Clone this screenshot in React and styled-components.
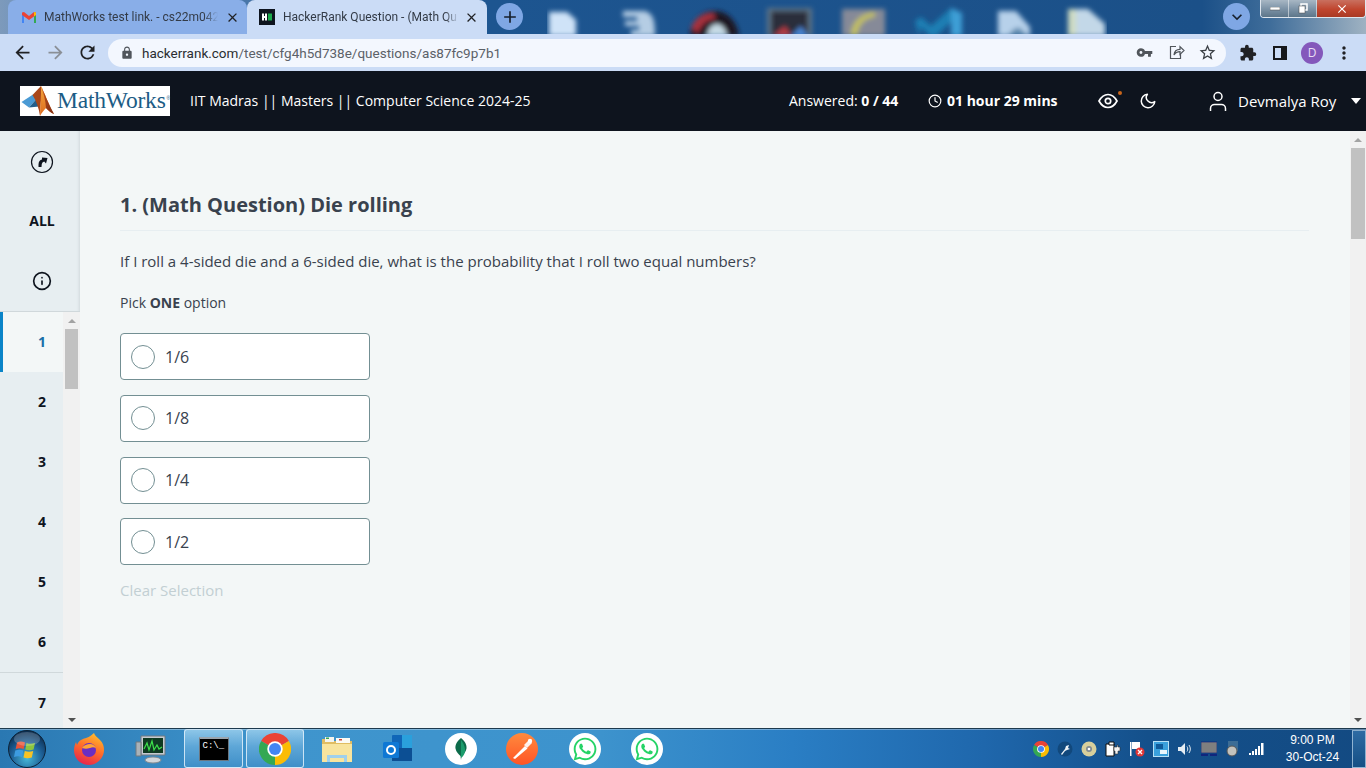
import React from "react";
import styled, { createGlobalStyle } from "styled-components";
import {
  MdArrowBack,
  MdArrowForward,
  MdRefresh,
  MdLock,
  MdVpnKey,
  MdExtension,
  MdMoreVert,
  MdStarBorder,
  MdClose,
  MdAdd,
  MdKeyboardArrowDown,
} from "react-icons/md";
import { FaWhatsapp } from "react-icons/fa";
import { FiClock, FiInfo, FiMoon } from "react-icons/fi";

const GlobalStyle = createGlobalStyle`
  html, body { margin: 0; padding: 0; background: #f3f7f7; }
  * { box-sizing: border-box; }
`;

const Screen = styled.div`
  width: 1366px;
  height: 768px;
  overflow: hidden;
  display: flex;
  flex-direction: column;
  font-family: "Open Sans", "Noto Sans", sans-serif;
`;

/* browser chrome */
const TabStrip = styled.div`
  height: 34px;
  flex: none;
  display: flex;
  padding-left: 8px;
  background: linear-gradient(90deg, #7d9abb 0, #6f93bd 2%, #1d5590 36%, #1b5088 88%, #3f6d9a 93%, #9fb2c2 100%);
  overflow: hidden;
`;
const Tab = styled.div`
  width: ${(p) => p.$w}px;
  height: 34px;
  flex: none;
  display: flex;
  align-items: center;
  padding-left: ${(p) => p.$pad}px;
  border-radius: 8px 8px 0 0;
  background: ${(p) => (p.$active ? "#cbdcf6" : "#89aee8")};
  color: #333b47;
  font-family: "Roboto", sans-serif;
  font-size: 12px;
`;
const TabTitle = styled.span`
  width: ${(p) => p.$w}px;
  margin-left: ${(p) => p.$gap}px;
  white-space: nowrap;
  -webkit-mask-image: linear-gradient(90deg, #000 92%, transparent);
  mask-image: linear-gradient(90deg, #000 92%, transparent);
`;
const TabClose = styled(MdClose)`
  margin-left: ${(p) => p.$gap}px;
  font-size: 15px;
  color: #202124;
`;
const RoundButton = styled.div`
  width: 27px;
  height: 27px;
  margin: 3px 0 0 ${(p) => p.$left}px;
  flex: none;
  border-radius: 50%;
  background: #7fa7e4;
  color: #17202c;
  font-size: 20px;
  display: flex;
  align-items: center;
  justify-content: center;
`;
const DesktopPeek = styled.svg`
  margin-left: 24px;
  flex: none;
`;
const WindowControls = styled.div`
  width: 106px;
  height: 18px;
  margin-left: 10px;
  flex: none;
  display: flex;
  border: 1px solid #dfe6ee;
  border-top: none;
  border-radius: 0 0 4px 4px;
  overflow: hidden;
`;
const WindowButton = styled.div`
  width: ${(p) => p.$w}px;
  flex: none;
  display: flex;
  align-items: center;
  justify-content: center;
  border-right: 1px solid rgba(255, 255, 255, 0.5);
  background: ${(p) =>
    p.$close
      ? "linear-gradient(#c9705f, #c0452e 55%, #a93a24)"
      : "linear-gradient(#a8b7c4, #7e94a8 50%, #5d7689)"};
  color: #fff;
`;

const Toolbar = styled.div`
  height: 37px;
  flex: none;
  display: flex;
  align-items: center;
  padding-left: 12px;
  background: #cbdcf6;
  color: #2f3338;
`;
const NavIcon = styled.div`
  width: ${(p) => p.$w}px;
  padding-left: ${(p) => p.$pad || 0}px;
  flex: none;
  display: flex;
  align-items: center;
  color: ${(p) => p.$color || "#202124"};
  font-size: ${(p) => p.$size || 21}px;
`;
const Omnibox = styled.div`
  width: 1118px;
  height: 28px;
  margin-left: 8px;
  flex: none;
  display: flex;
  align-items: center;
  padding-left: 12px;
  border-radius: 14px;
  background: #f3f7fe;
`;
const Url = styled.div`
  width: 994px;
  margin-left: 8px;
  flex: none;
  font-family: "Roboto", sans-serif;
  font-size: 13.5px;
  color: #5b6168;
  span { color: #2a2d31; }
`;
const Avatar = styled.div`
  width: 22px;
  height: 22px;
  margin-left: 11px;
  flex: none;
  border-radius: 50%;
  background: #8458bb;
  color: #e9def5;
  font-size: 12px;
  display: flex;
  align-items: center;
  justify-content: center;
`;

/* app header */
const AppHeader = styled.header`
  height: 60px;
  flex: none;
  display: flex;
  align-items: center;
  padding: 0 0 1px 20px;
  background: #0e141e;
  color: #fff;
  font-size: 14px;
`;
const Logo = styled.div`
  width: 150px;
  height: 30px;
  flex: none;
  display: flex;
  align-items: center;
  background: #fff;
  svg { flex: none; }
`;
const LogoText = styled.span`
  margin-left: 2px;
  font-family: "Liberation Serif", serif;
  font-size: 23.5px;
  letter-spacing: -0.2px;
  color: #1c5c85;
`;
const LogoMark = styled.span`
  margin: -5px 0 0 1px;
  font-family: "Liberation Sans", sans-serif;
  font-size: 5px;
  color: #1c5c85;
`;
const TestName = styled.div`
  width: 599px;
  margin-left: 20px;
  flex: none;
  white-space: nowrap;
`;
const Answered = styled.div`
  width: 139px;
  flex: none;
  white-space: nowrap;
  b { font-weight: 700; }
`;
const Timer = styled.div`
  width: 170px;
  flex: none;
  display: flex;
  align-items: center;
  gap: 5px;
  font-weight: 700;
  white-space: nowrap;
  svg { font-size: 14px; }
`;
const EyeWrap = styled.div`
  position: relative;
  width: 41px;
  flex: none;
  display: flex;
`;
const EyeDot = styled.span`
  position: absolute;
  left: 20px;
  top: -2px;
  width: 4px;
  height: 4px;
  border-radius: 50%;
  background: #c8651b;
`;
const Moon = styled.div`
  width: 70px;
  flex: none;
  display: flex;
  font-size: 18px;
`;
const UserName = styled.div`
  width: 113px;
  margin-left: 11px;
  flex: none;
  font-size: 15px;
  white-space: nowrap;
`;
const Caret = styled.div`
  width: 0;
  height: 0;
  border-left: 5px solid transparent;
  border-right: 5px solid transparent;
  border-top: 6px solid #fff;
`;

/* page body */
const Body = styled.div`
  flex: 1;
  min-height: 0;
  display: flex;
  background: #f3f7f7;
`;
const Sidebar = styled.aside`
  width: 80px;
  flex: none;
  display: flex;
  flex-direction: column;
  background: #e7eef1;
`;
const SideTools = styled.div`
  flex: none;
  border-bottom: 1px solid #d0d8db;
  box-shadow: inset -3px 0 3px -2px rgba(57, 66, 78, 0.12);
`;
const SideTool = styled.div`
  height: 60px;
  display: flex;
  align-items: center;
  justify-content: center;
  padding: ${(p) => p.$top || 0}px 0 ${(p) => p.$bottom || 0}px 4px;
  color: #0e141e;
  font-size: 14px;
  font-weight: 700;
`;
const SideList = styled.div`
  flex: 1;
  min-height: 0;
  display: flex;
`;
const Numbers = styled.div`
  width: 63px;
  flex: none;
  overflow: hidden;
`;
const NumberItem = styled.div`
  height: ${(p) => (p.$divided ? 61 : 60)}px;
  display: flex;
  align-items: center;
  justify-content: center;
  padding: 0 0 2px ${(p) => (p.$active ? 18 : 21)}px;
  border-left: ${(p) => (p.$active ? "3px solid #0a84c8" : "none")};
  border-bottom: ${(p) => (p.$divided ? "1px solid #d0d8db" : "none")};
  background: ${(p) => (p.$active ? "#f3f7f7" : "transparent")};
  color: ${(p) => (p.$active ? "#1b6ea8" : "#0e141e")};
  font-size: 14px;
  font-weight: 700;
`;
const Scrollbar = styled.div`
  width: ${(p) => p.$w}px;
  flex: none;
  display: flex;
  flex-direction: column;
  align-items: center;
  background: #f1f1f1;
`;
const ScrollArrow = styled.div`
  width: 0;
  height: 0;
  flex: none;
  margin: ${(p) => p.$margin};
  border-left: 4px solid transparent;
  border-right: 4px solid transparent;
  border-${(p) => (p.$down ? "top" : "bottom")}: 4px solid ${(p) => p.$color || "#a3a3a3"};
`;
const ScrollThumb = styled.div`
  width: ${(p) => p.$w}px;
  height: ${(p) => p.$h}px;
  margin-top: ${(p) => p.$top}px;
  flex: none;
  background: #c1c1c1;
`;
const ScrollSpacer = styled.div`
  flex: 1;
`;

const Main = styled.main`
  flex: 1;
  min-width: 0;
  padding: 60px 41px 0 40px;
  color: #39424e;
`;
const Title = styled.h1`
  margin: 0;
  padding-bottom: 11px;
  border-bottom: 1px solid #e7eef1;
  font-size: 20px;
  line-height: 28px;
  font-weight: 700;
`;
const Question = styled.p`
  margin: 20px 0 0;
  font-size: 15px;
  line-height: 20px;
`;
const Pick = styled.p`
  margin: 22px 0 20px;
  font-size: 14px;
  line-height: 20px;
  b { font-weight: 700; }
`;
const Options = styled.div`
  display: flex;
  flex-direction: column;
  gap: 14.75px;
`;
const Option = styled.label`
  width: 250px;
  height: 47px;
  display: flex;
  align-items: center;
  gap: 10px;
  padding: 0 0 0 10px;
  border: 1px solid #738f93;
  border-radius: 4px;
  background: #fff;
  font-size: 16px;
`;
const Radio = styled.span`
  width: 24px;
  height: 24px;
  flex: none;
  border: 1px solid #738f93;
  border-radius: 50%;
`;
const ClearSelection = styled.div`
  margin-top: 14px;
  font-size: 15px;
  line-height: 22px;
  color: #c2cfd3;
`;

/* windows taskbar */
const Taskbar = styled.footer`
  height: 40px;
  flex: none;
  display: flex;
  align-items: center;
  border-top: 1px solid #1d3a4e;
  box-shadow: inset 0 1px 0 rgba(255, 255, 255, 0.35);
  background: linear-gradient(90deg, #2a78b2 0, #3f95cd 20%, #3d93cd 44%, #2a7ec4 58%, #1f67ac 72%, #14508b 84%, #134a82 100%);
`;
const Slot = styled.div`
  width: ${(p) => p.$w}px;
  height: 38px;
  padding-right: ${(p) => p.$pad || 0}px;
  flex: none;
  display: flex;
  align-items: center;
  justify-content: center;
`;
const TaskButton = styled(Slot)`
  margin: 0 ${(p) => p.$right || 2}px 0 ${(p) => p.$left || 0}px;
  height: 39px;
  border: 1px solid rgba(225, 240, 250, 0.85);
  border-radius: 3px;
  background: linear-gradient(#8dc6e8, #5da6d7 45%, #3f8fc8 100%);
`;
const WhiteDisc = styled.div`
  width: 32px;
  height: 32px;
  border-radius: 50%;
  background: #fff;
  display: flex;
  align-items: center;
  justify-content: center;
  color: #25d366;
  font-size: 26px;
`;
const Console = styled.div`
  width: 30px;
  height: 24px;
  padding: 2px 0 0 3px;
  background: #000;
  border: 1px solid #6b7680;
  border-top: 2px solid #9aa5ae;
  color: #fff;
  font-family: "Liberation Mono", monospace;
  font-size: 9px;
  line-height: 10px;
`;
const TraySpacer = styled.div`
  flex: 1;
`;
const Clock = styled.div`
  width: 83px;
  flex: none;
  color: #fff;
  font-family: "Liberation Sans", sans-serif;
  font-size: 12px;
  line-height: 17px;
  text-align: center;
  padding-left: 4px;
`;
const ShowDesktop = styled.div`
  width: 14px;
  height: 38px;
  flex: none;
  border: 1px solid rgba(190, 215, 235, 0.7);
  background: linear-gradient(#2e6ba3, #154f85);
`;

const ChromeLogo = ({ size }) => (
  <svg width={size} height={size} viewBox="0 0 24 24">
    <path d="M12 12L1.6 6A12 12 0 0 1 22.4 6Z" fill="#ea4335" />
    <path d="M12 12L22.4 6A12 12 0 0 1 12 24Z" fill="#fbbc04" />
    <path d="M12 12L12 24A12 12 0 0 1 1.6 6Z" fill="#34a853" />
    <circle cx="12" cy="12" r="5.8" fill="#fff" />
    <circle cx="12" cy="12" r="4.5" fill="#4285f4" />
  </svg>
);

const GmailIcon = () => (
  <svg width="16" height="13" viewBox="0 0 16 13">
    <path d="M1 12V2.5L3 2v10Z" fill="#4285f4" />
    <path d="M13 12V2l2 .5V12Z" fill="#34a853" />
    <path d="M1 1.5 3 1l5 4 5-4 2 .5V4L8 9 1 4Z" fill="#ea4335" />
    <path d="M13 1l2 .5V4l-2 1.4Z" fill="#fbbc04" />
  </svg>
);

const HackerRankIcon = () => (
  <svg width="16" height="16" viewBox="0 0 16 16">
    <rect width="16" height="16" fill="#0e141e" />
    <path d="M3 4.500h2v2.500h1V4.500h2v7H6V9H5v2.500H3Z" fill="#fff" />
    <rect x="9" y="4.500" width="4" height="7" fill="#1ba94c" />
  </svg>
);

const ShareIcon = () => (
  <svg width="17" height="17" viewBox="0 0 17 17" fill="none" stroke="#50555b" strokeWidth="1.2">
    <path d="M8 2.5H2.5v12h10V10" />
    <path d="M6 11c.3-3.5 2.5-5.7 6-5.7V2.6l4 3.9-4 3.9V7.6c-2.6 0-4.600 1-6 3.400Z" />
  </svg>
);

const PanelIcon = () => (
  <svg width="14" height="14" viewBox="0 0 14 14" fill="none">
    <rect x="1" y="1" width="12" height="12" stroke="#17191c" strokeWidth="2" />
    <rect x="8" y="1" width="5" height="12" fill="#17191c" />
  </svg>
);

const MathWorksMark = () => (
  <svg width="35" height="30" viewBox="0 0 35 30">
    <defs>
      <linearGradient id="mwOrange" x1="0.5" y1="0" x2="0.5" y2="1">
        <stop offset="0" stopColor="#f3a63c" />
        <stop offset="1" stopColor="#dc6a1e" />
      </linearGradient>
      <linearGradient id="mwRed" x1="0" y1="0" x2="1" y2="1">
        <stop offset="0" stopColor="#c9561c" />
        <stop offset="1" stopColor="#7a2a14" />
      </linearGradient>
    </defs>
    <path d="M1.500 16 13 8.500l3 5-7 8Z" fill="#4a9ad4" />
    <path d="M9 21.500l7-8 3 7Z" fill="#245e8a" />
    <path d="M12.500 9 21 0c1.500 9-1 19-1 30-1-7-3.500-15-7.500-21Z" fill="#a9471a" />
    <path d="M21 0c3 6 8 19 13 28-3-1-6-3.500-8-6-2 2-4.500 5-6 8 0-11 1.500-21 1-30Z" fill="url(#mwOrange)" />
    <path d="M21 0c3 6 8 19 13 28-3-1-6-3.500-8-6-.5-8-2.500-15-5-22Z" fill="url(#mwRed)" />
  </svg>
);

const EyeIcon = () => (
  <svg width="20" height="16" viewBox="0 0 20 16" fill="none" stroke="#fff" strokeWidth="1.7">
    <path d="M1 8c2.2-4 5.2-6.5 9-6.5S16.800 4 19 8c-2.200 4-5.200 6.500-9 6.500S3.200 12 1 8Z" />
    <circle cx="10" cy="8" r="2.700" />
  </svg>
);

const UserIcon = () => (
  <svg width="18" height="20" viewBox="0 0 18 20" fill="none" stroke="#fff" strokeWidth="1.5">
    <circle cx="9" cy="5.500" r="4" />
    <path d="M1.500 20v-2.500c0-2.500 2-4 4-4h7c2 0 4 1.500 4 4V20" />
  </svg>
);

const CompassIcon = () => (
  <svg width="24" height="24" viewBox="0 0 24 24" fill="none">
    <circle cx="12" cy="12" r="10.500" stroke="#0e141e" strokeWidth="1.200" />
    <path d="M8.500 17v-2.500c0-3 1.500-4.500 3.500-5V7.500L17.500 8 16 13.500l-1.800-2c-1.500.4-2.200 1.500-2.500 3L11.500 17Z" fill="#0e141e" />
  </svg>
);

const WindowsOrb = () => (
  <svg width="40" height="40" viewBox="0 0 40 40">
    <defs>
      <radialGradient id="orb" cx="0.5" cy="0.75" r="0.7">
        <stop offset="0" stopColor="#47b8d8" />
        <stop offset="0.6" stopColor="#1d5f96" />
        <stop offset="1" stopColor="#0d2f52" />
      </radialGradient>
    </defs>
    <circle cx="20" cy="20" r="18.500" fill="url(#orb)" stroke="#0c2338" />
    <path d="M10 13.500c2.500-1.200 5-1.200 8 0l-1.300 6.500c-2.800-1-5-1-8 0Z" fill="#e8553a" />
    <path d="M19.500 14c3 1.200 5.500 1 8.500 0l-1.400 6.500c-2.800 1-5.500 1-8.300 0Z" fill="#8cc63f" />
    <path d="M8.300 21.500c3-1 5-1 8 0L15 28c-2.800-1-5-1-8 0Z" fill="#3d9be0" />
    <path d="M17.800 22c2.800 1 5.500 1 8.400 0l-1.400 6.500c-3 1-5.500 1-8.300 0Z" fill="#f7c325" />
    <ellipse cx="20" cy="10" rx="13" ry="7" fill="#fff" opacity="0.2" />
  </svg>
);

const FirefoxIcon = () => (
  <svg width="32" height="32" viewBox="0 0 32 32">
    <defs>
      <linearGradient id="ffBody" x1="0.7" y1="0" x2="0.3" y2="1">
        <stop offset="0" stopColor="#ffbd2e" />
        <stop offset="0.5" stopColor="#ff6a2a" />
        <stop offset="1" stopColor="#e5234f" />
      </linearGradient>
    </defs>
    <path d="M21 0c1 3 3 4 6 7 3 3 4 6 4 10 0 8-7 15-15 15S1 26 1 17c0-3 1-6 2-8l1 3c1-3 3-5 6-6 3-1 7-2 11-6Z" fill="url(#ffBody)" />
    <circle cx="16" cy="17" r="7" fill="#6a2ec2" />
    <path d="M9 15c2-3 5-4 8-4 3 0 5 2 6 4-2-1-4-1-6 0-3 1-5 1-8 0Z" fill="#ffa436" />
  </svg>
);

const MonitorIcon = () => (
  <svg width="32" height="30" viewBox="0 0 32 30">
    <path d="M6 2h24v19H6Z" fill="#c4cad0" stroke="#717980" />
    <rect x="8" y="4" width="20" height="15" fill="#0f3a22" />
    <path d="M9 15l3-6 2 7 3-9 2 9 3-5 2 4 3-2" fill="none" stroke="#3ee04b" strokeWidth="1.200" />
    <path d="M1 8h5v14H1Z" fill="#aab2b8" stroke="#70787e" />
    <ellipse cx="18" cy="26" rx="8" ry="3" fill="#d2d6da" stroke="#858b90" />
  </svg>
);

const FolderIcon = () => (
  <svg width="32" height="28" viewBox="0 0 32 28">
    <path d="M1 4h9l2 2h19v21H1Z" fill="#e0bd63" />
    <path d="M4 2h9v5H4Z" fill="#f4f4ee" />
    <path d="M15 3h14v5H15Z" fill="#fbfbf6" />
    <rect x="5" y="2.500" width="3" height="1.500" fill="#3aa655" />
    <rect x="18" y="4" width="3" height="1.500" fill="#d0483a" />
    <path d="M1 9h30v18H1Z" fill="#f8e49e" />
    <path d="M6 27v-7h20v7h-3v-4H9v4Z" fill="#9fd0ec" />
  </svg>
);

const OutlookIcon = () => (
  <svg width="32" height="30" viewBox="0 0 32 30">
    <rect x="10" y="1" width="20" height="26" rx="1" fill="#1066b8" />
    <rect x="20" y="1" width="10" height="13" fill="#2aa0dc" />
    <path d="M10 14h20v13H10Z" fill="#0c4f94" />
    <rect x="1" y="8" width="16" height="16" rx="1.500" fill="#0f78d4" />
    <circle cx="9" cy="16" r="4" fill="none" stroke="#fff" strokeWidth="2" />
  </svg>
);

const LeafIcon = () => (
  <svg width="12" height="22" viewBox="0 0 12 22">
    <path d="M6 0c4 3 6 7 5.500 10.500C11 14 8 16.500 6.500 18L6 22l-.5-4C4 16.500 1 14 .5 10.500 0 7 2 3 6 0Z" fill="#0c6b4a" />
    <path d="M6 2v18c3-2 4.500-5.500 4-9-.3-3-2-6.500-4-9Z" fill="#1a9c6b" />
  </svg>
);

const PostmanDisc = () => (
  <svg width="32" height="32" viewBox="0 0 32 32">
    <defs>
      <linearGradient id="pmBg" x1="0" y1="0" x2="0" y2="1">
        <stop offset="0" stopColor="#ff8a3d" />
        <stop offset="1" stopColor="#ff5426" />
      </linearGradient>
    </defs>
    <circle cx="16" cy="16" r="16" fill="url(#pmBg)" />
    <path d="M7 25 19 13l2.500 2.500L9 26Z" fill="#fff" />
    <path d="M18 12l5-5 3 3-5 5Z" fill="#fff" opacity="0.9" />
    <circle cx="24" cy="8" r="2.200" fill="#fff" />
  </svg>
);

const TrayGlyph = ({ kind }) => {
  if (kind === "chrome") return <ChromeLogo size={16} />;
  if (kind === "tool")
    return (
      <svg width="16" height="16" viewBox="0 0 16 16">
        <circle cx="8" cy="8" r="7.500" fill="#11487c" />
        <path d="M4 13l4-5 1-3 3-1-1 3 2 1-3 1-2 1-3 4Z" fill="#eef3f7" />
      </svg>
    );
  if (kind === "disc")
    return (
      <svg width="16" height="16" viewBox="0 0 16 16">
        <circle cx="8" cy="8" r="7.500" fill="#d7cf9c" />
        <circle cx="8" cy="8" r="3" fill="#7f8a92" />
        <circle cx="8" cy="8" r="1.300" fill="#fff" />
      </svg>
    );
  if (kind === "plug")
    return (
      <svg width="16" height="16" viewBox="0 0 16 16">
        <path d="M1 3h8v12H1Z" fill="#fff" stroke="#111" />
        <path d="M4 1h5v3H4Z" fill="#fff" stroke="#111" />
        <path d="M9 6h3V4h1v2h2v4h-2v3h-3v-3H9Z" fill="#f4f4f4" stroke="#333" strokeWidth="0.600" />
      </svg>
    );
  if (kind === "flag")
    return (
      <svg width="16" height="16" viewBox="0 0 16 16">
        <path d="M1 1h1.500v14H1Z" fill="#fff" />
        <path d="M3 1h8v7H3Z" fill="#fff" />
        <circle cx="11" cy="11" r="4.500" fill="#e23636" />
        <path d="M9 9l4 4M13 9l-4 4" stroke="#fff" strokeWidth="1.300" />
      </svg>
    );
  if (kind === "box")
    return (
      <svg width="16" height="16" viewBox="0 0 16 16">
        <rect x="0.500" y="0.500" width="15" height="15" fill="#3aa0dc" stroke="#b7e0f5" />
        <rect x="3" y="3" width="7" height="5" fill="#0f5a9a" />
        <path d="M7 9h7v4H7Z" fill="#e9f5fb" />
      </svg>
    );
  if (kind === "sound")
    return (
      <svg width="16" height="16" viewBox="0 0 16 16" fill="none">
        <path d="M1 6h3l4-4v12l-4-4H1Z" fill="#e6edf3" />
        <path d="M10 5.500c1 1.500 1 3.500 0 5M12 4c1.800 2.500 1.800 5.500 0 8" stroke="#dfe8ef" />
      </svg>
    );
  if (kind === "screen")
    return (
      <svg width="16" height="16" viewBox="0 0 16 16">
        <rect y="1" width="16" height="11" fill="#7f7f7f" stroke="#101a7a" strokeWidth="0.600" />
        <path d="M0 14h7M9 14h7" stroke="#101a7a" strokeWidth="1.400" />
      </svg>
    );
  if (kind === "media")
    return (
      <svg width="14" height="16" viewBox="0 0 14 16">
        <rect x="2" y="0" width="10" height="10" fill="#3c6d96" />
        <circle cx="6" cy="10" r="5" fill="#c2c2bd" stroke="#555" />
      </svg>
    );
  return (
    <svg width="16" height="12" viewBox="0 0 16 12" fill="#fff">
      <rect x="0" y="10" width="2" height="2" />
      <rect x="3" y="8" width="2" height="4" />
      <rect x="6" y="6" width="2" height="6" />
      <rect x="9" y="3" width="2" height="9" />
      <rect x="12" y="0" width="2.500" height="12" />
    </svg>
  );
};

// out of focus icons of the desktop behind the window, x is from 547 on screen
const DesktopIcons = () => (
  <DesktopPeek width="560" height="34" viewBox="0 0 560 34">
    <defs>
      <filter id="soft" x="-5%" y="-20%" width="110%" height="140%">
        <feGaussianBlur stdDeviation="2.600" />
      </filter>
    </defs>
    <g filter="url(#soft)">
      <path d="M2 12h18l9 8v16H2Z" fill="#cfe3f8" />
      <path d="M76 11h22c8 3 10 8 10 25H84v-6h8v-4H78v-5h12v-4H76Z" fill="#b5cde4" />
      <path d="M143 36c1-14 10-25 25-25 13 0 22 11 24 25Z" fill="#1b1520" />
      <path d="M144 28c4-10 12-15 22-15l3 6c-8 0-14 4-18 14Z" fill="#a8323c" />
      <path d="M160 36c1-8 5-12 10-12s9 5 10 12Z" fill="#c6dbe6" />
      <rect x="220" y="8" width="45" height="28" fill="#5f7488" />
      <rect x="224" y="11" width="37" height="25" fill="#2b2f3a" />
      <path d="M226 36l12-10 6 10Z" fill="#b93a42" />
      <path d="M244 36l10-10 7 10Z" fill="#4a86d6" />
      <rect x="295" y="9" width="43" height="27" fill="#868a98" />
      <path d="M304 36c0-14 10-23 24-24v5c-11 1-17 9-18 19Z" fill="#c2bf5e" />
      <path d="M368 21l6-4 10 9 20-18 11 5v23h-11V22l-15 14h-6l-9-9-2 9Z" fill="#1b7fb4" />
      <path d="M404 8l11 5v23h-11Z" fill="#3d9fd6" />
      <path d="M451 11h18l14 16v9h-32Z" fill="#b7d1ea" />
      <path d="M462 36c2-6 7-9 11-8l8 8Z" fill="#5d8ab0" />
      <path d="M521 9h20l17 15v12h-37Z" fill="#c3d8e8" />
      <path d="M521 9h8v27h-8Z" fill="#cfdcc2" />
    </g>
  </DesktopPeek>
);

const questionNumbers = [1, 2, 3, 4, 5, 6, 7];
const choices = ["1/6", "1/8", "1/4", "1/2"];
const trayIcons = ["chrome", "tool", "disc", "plug", "flag", "box", "sound", "screen", "media", "signal"];

export default function App() {
  return (
    <Screen>
      <GlobalStyle />
      <TabStrip>
        <Tab $w={239} $pad={13}>
          <GmailIcon />
          <TabTitle $w={174} $gap={7}>MathWorks test link. - cs22m042(</TabTitle>
          <TabClose $gap={7} />
        </Tab>
        <Tab $active $w={240} $pad={12}>
          <HackerRankIcon />
          <TabTitle $w={176} $gap={8}>HackerRank Question - (Math Qu</TabTitle>
          <TabClose $gap={5} />
        </Tab>
        <RoundButton $left={9}>
          <MdAdd />
        </RoundButton>
        <DesktopIcons />
        <RoundButton $left={116}>
          <MdKeyboardArrowDown />
        </RoundButton>
        <WindowControls>
          <WindowButton $w={28}>
            <svg width="10" height="4"><rect width="10" height="3" fill="#fff" stroke="#444" strokeWidth="0.5" /></svg>
          </WindowButton>
          <WindowButton $w={28}>
            <svg width="10" height="11" fill="none" stroke="#fff" strokeWidth="1.5"><rect x="3" y="1" width="6" height="6" /><rect x="1" y="3" width="6" height="7" stroke="#444" strokeWidth="0.5" fill="#fff" /></svg>
          </WindowButton>
          <WindowButton $w={50} $close>
            <MdClose size={14} />
          </WindowButton>
        </WindowControls>
      </TabStrip>

      <Toolbar>
        <NavIcon $w={33}><MdArrowBack /></NavIcon>
        <NavIcon $w={32} $color="#8a8f96"><MdArrowForward /></NavIcon>
        <NavIcon $w={23}><MdRefresh /></NavIcon>
        <Omnibox>
          <NavIcon $w={14} $size={14} $color="#50555b"><MdLock /></NavIcon>
          <Url>
            <span>hackerrank.com</span>/test/cfg4h5d738e/questions/as87fc9p7b1
          </Url>
          <NavIcon $w={32} $size={17} $color="#50555b"><MdVpnKey /></NavIcon>
          <NavIcon $w={30}><ShareIcon /></NavIcon>
          <NavIcon $w={20} $size={19} $color="#3a3f45"><MdStarBorder /></NavIcon>
        </Omnibox>
        <NavIcon $w={32} $size={18} $pad={13}><MdExtension /></NavIcon>
        <NavIcon $w={32} $pad={15}><PanelIcon /></NavIcon>
        <Avatar>D</Avatar>
        <NavIcon $w={33} $size={20} $pad={11}><MdMoreVert /></NavIcon>
      </Toolbar>

      <AppHeader>
        <Logo>
          <MathWorksMark />
          <LogoText>MathWorks</LogoText>
          <LogoMark>®</LogoMark>
        </Logo>
        <TestName>IIT Madras || Masters || Computer Science 2024-25</TestName>
        <Answered>Answered: <b>0 / 44</b></Answered>
        <Timer><FiClock />01 hour 29 mins</Timer>
        <EyeWrap><EyeIcon /><EyeDot /></EyeWrap>
        <Moon><FiMoon /></Moon>
        <UserIcon />
        <UserName>Devmalya Roy</UserName>
        <Caret />
      </AppHeader>

      <Body>
        <Sidebar>
          <SideTools>
            <SideTool $top={2}><CompassIcon /></SideTool>
            <SideTool $bottom={2}>ALL</SideTool>
            <SideTool><FiInfo size={20} /></SideTool>
          </SideTools>
          <SideList>
            <Numbers>
              {questionNumbers.map((n) => (
                <NumberItem key={n} $active={n === 1} $divided={n === 6}>{n}</NumberItem>
              ))}
            </Numbers>
            <Scrollbar $w={17}>
              <ScrollArrow $margin="7px 0 0" />
              <ScrollThumb $w={13} $h={60} $top={6} />
              <ScrollSpacer />
              <ScrollArrow $down $color="#505050" $margin="0 0 6px" />
            </Scrollbar>
          </SideList>
        </Sidebar>
        <Main>
          <Title>1. (Math Question) Die rolling</Title>
          <Question>If I roll a 4-sided die and a 6-sided die, what is the probability that I roll two equal numbers?</Question>
          <Pick>Pick <b>ONE</b> option</Pick>
          <Options>
            {choices.map((c) => (
              <Option key={c}><Radio />{c}</Option>
            ))}
          </Options>
          <ClearSelection>Clear Selection</ClearSelection>
        </Main>
        <Scrollbar $w={16}>
          <ScrollArrow $margin="7px 0 0" />
          <ScrollThumb $w={14} $h={91} $top={6} />
          <ScrollSpacer />
          <ScrollArrow $down $color="#505050" $margin="0 0 6px" />
        </Scrollbar>
      </Body>

      <Taskbar>
        <Slot $w={56} $pad={2}><WindowsOrb /></Slot>
        <Slot $w={66}><FirefoxIcon /></Slot>
        <Slot $w={58}><MonitorIcon /></Slot>
        <TaskButton $w={59} $left={4} $right={3}><Console>C:\_</Console></TaskButton>
        <TaskButton $w={58}><ChromeLogo size={32} /></TaskButton>
        <Slot $w={62}><FolderIcon /></Slot>
        <Slot $w={60}><OutlookIcon /></Slot>
        <Slot $w={66}><WhiteDisc><LeafIcon /></WhiteDisc></Slot>
        <Slot $w={56}><PostmanDisc /></Slot>
        <Slot $w={70}><WhiteDisc><FaWhatsapp /></WhiteDisc></Slot>
        <Slot $w={54}><WhiteDisc><FaWhatsapp /></WhiteDisc></Slot>
        <TraySpacer />
        {trayIcons.map((k) => (
          <Slot key={k} $w={24}><TrayGlyph kind={k} /></Slot>
        ))}
        <Clock>9:00 PM<br />30-Oct-24</Clock>
        <ShowDesktop />
      </Taskbar>
    </Screen>
  );
}
